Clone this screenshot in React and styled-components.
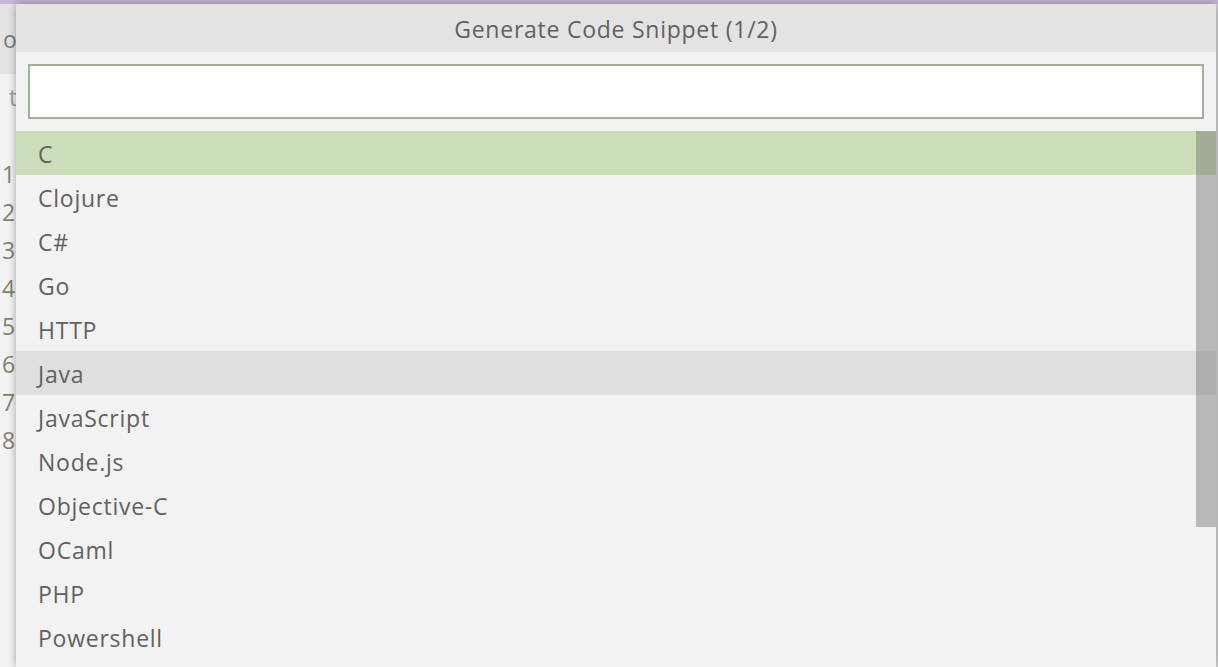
import React from "react";
import styled, { createGlobalStyle } from "styled-components";

const Global = createGlobalStyle`
  html, body { margin: 0; padding: 0; }
  body {
    width: 1218px; height: 667px; overflow: hidden;
    background: #f3f3f3;
    font-family: "Open Sans", "Noto Sans", sans-serif;
  }
`;

const Window = styled.div`
  position: relative;
  width: 1218px;
  height: 667px;
  display: flex;
  flex-direction: column;
  background: #f3f3f3;
  overflow: hidden;
`;

const TitleStrip = styled.div`
  height: 4px;
  flex: none;
  background: #c6b6d8;
`;

const TabBar = styled.div`
  height: 70px;
  flex: none;
  background: #e4e4e4;
  display: flex;
  align-items: center;
  padding-left: 3px;
  font-size: 23px;
  color: #7d7d7d;
`;

const Breadcrumb = styled.div`
  height: 46px;
  flex: none;
  display: flex;
  align-items: center;
  padding-left: 9px;
  font-size: 23px;
  color: #a0a0a0;
`;

const Editor = styled.div`
  display: flex;
  flex-direction: column;
  padding-top: 35px;
  padding-left: 2px;
`;

const LineNo = styled.div`
  height: 38px;
  line-height: 38px;
  font-size: 23px;
  color: #85836f;
`;

const Panel = styled.div`
  position: absolute;
  left: 16px;
  top: 4px;
  width: 1200px;
  bottom: 0;
  background: #f2f2f2;
  box-shadow: 0 0 8px rgba(0, 0, 0, 0.35);
  display: flex;
  flex-direction: column;
`;

const PanelTitle = styled.div`
  height: 48px;
  box-sizing: border-box;
  padding-top: 2px;
  flex: none;
  background: #e3e3e3;
  color: #616161;
  font-size: 23px;
  letter-spacing: 0.75px;
  display: flex;
  align-items: center;
  justify-content: center;
`;

const InputWrap = styled.div`
  padding: 12px;
  flex: none;
`;

const Input = styled.input`
  display: block;
  box-sizing: border-box;
  width: 100%;
  height: 55px;
  border: 2px solid #a2b095;
  background: #ffffff;
  outline: none;
  font-size: 23px;
  font-family: inherit;
`;

const ListArea = styled.div`
  position: relative;
  flex: 1;
  overflow: hidden;
`;

const Row = styled.div`
  height: 44px;
  box-sizing: border-box;
  padding-top: 2px;
  display: flex;
  align-items: center;
  padding-left: 22px;
  font-size: 23px;
  letter-spacing: 0.75px;
  color: #616161;
  background: ${(p) => (p.$selected ? "#cbdeb9" : p.$hover ? "#dfdfdf" : "transparent")};
`;

const ScrollTrack = styled.div`
  position: absolute;
  right: 0;
  top: 0;
  width: 20px;
  height: 396px;
  background: rgba(100, 100, 100, 0.4);
`;

const RightEdge = styled.div`
  position: absolute;
  right: 0;
  top: 4px;
  bottom: 0;
  width: 2px;
  background: #d6d6d6;
`;

const items = [
  "C",
  "Clojure",
  "C#",
  "Go",
  "HTTP",
  "Java",
  "JavaScript",
  "Node.js",
  "Objective-C",
  "OCaml",
  "PHP",
  "Powershell",
];

export default function App() {
  return (
    <>
      <Global />
      <Window>
        <TitleStrip />
        <TabBar>o</TabBar>
        <Breadcrumb>t</Breadcrumb>
        <Editor>
          {[1, 2, 3, 4, 5, 6, 7, 8].map((n) => (
            <LineNo key={n}>{n}</LineNo>
          ))}
        </Editor>
        <RightEdge />
        <Panel>
          <PanelTitle>Generate Code Snippet (1/2)</PanelTitle>
          <InputWrap>
            <Input />
          </InputWrap>
          <ListArea>
            {items.map((it, i) => (
              <Row key={it} $selected={i === 0} $hover={it === "Java"}>
                {it}
              </Row>
            ))}
            <ScrollTrack />
          </ListArea>
        </Panel>
      </Window>
    </>
  );
}
